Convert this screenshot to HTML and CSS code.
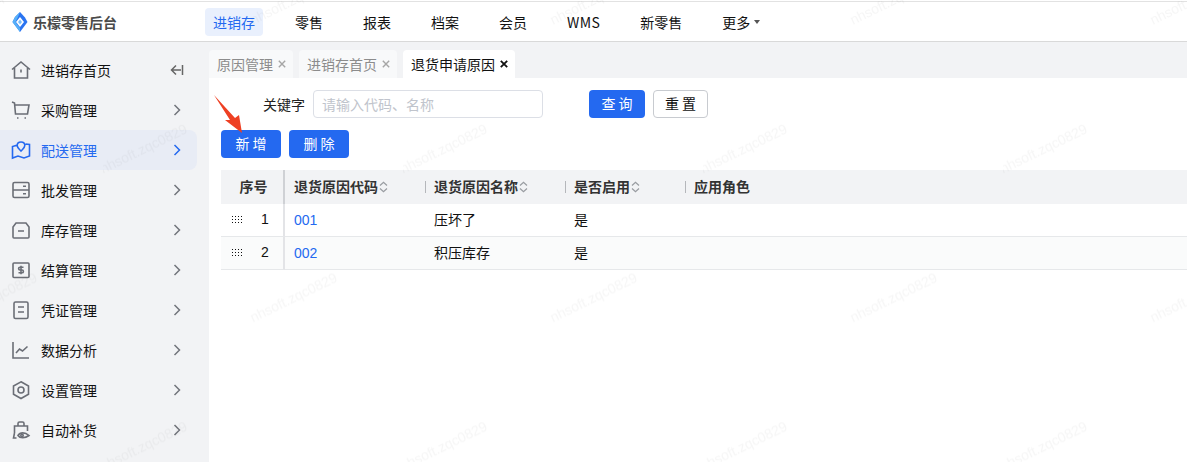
FILE: index.html
```html
<!DOCTYPE html>
<html lang="zh-CN">
<head>
<meta charset="utf-8">
<title>退货申请原因</title>
<link rel="stylesheet" href="styles.css">
</head>
<body>
<header class="topbar">
  <div class="brand">
    <svg class="brand-logo" width="16" height="20" viewBox="0 0 16 20">
      <path d="M8 0 13 5.500 15.500 10 8 20 .5 10 3 5Z" fill="#2a74f1"/>
      <path d="M.5 10 3 5 8 0 6 5 3.500 10 8 16 8 20Z" fill="#56b0f8"/>
      <path d="M8 5 12 10 8 15 4 10Z" fill="#fff"/>
      <path d="M8 7.500 10 10 8 12.500 6 10Z" fill="#7cc0fa"/>
    </svg>
    <span class="brand-name">乐檬零售后台</span>
  </div>
  <nav class="topnav">
    <a class="topnav-item is-active">进销存</a>
    <a class="topnav-item">零售</a>
    <a class="topnav-item">报表</a>
    <a class="topnav-item">档案</a>
    <a class="topnav-item">会员</a>
    <a class="topnav-item topnav-latin">WMS</a>
    <a class="topnav-item">新零售</a>
    <a class="topnav-item">更多<i class="caret"></i></a>
  </nav>
</header>

<div class="layout">
  <aside class="sidebar">
    <a class="side-item">
      <svg class="side-icon" viewBox="0 0 20 20"><path d="M1 9.500 10 2l9 7.500M3.500 8v10h13V8M10 9.500v3"/></svg>
      <span class="side-label">进销存首页</span>
      <svg class="side-collapse" viewBox="0 0 14 12"><path d="M6 1.500 1.500 6 6 10.500M1.500 6H11M12.500 1v10"/></svg>
    </a>
    <a class="side-item">
      <svg class="side-icon" viewBox="0 0 20 20"><path d="M1 2l2.500 1 1 11h12L18 5H4"/><path d="M6 18h1.500M13.500 18H15"/></svg>
      <span class="side-label">采购管理</span>
      <svg class="side-arrow" viewBox="0 0 8 12"><path d="M1.500 1 6.500 6l-5 5"/></svg>
    </a>
    <a class="side-item is-active">
      <svg class="side-icon" viewBox="0 0 20 20"><path d="M6.500 5 1.500 6.500v11.500l5.500-2 6 2 5.500-2V4.500l-4-.5M10 2c-2.200 0-3.800 1.600-3.800 3.600 0 2.400 2.300 3.700 3.800 5.400 1.500-1.700 3.800-3 3.800-5.400C13.800 3.600 12.200 2 10 2Z"/></svg>
      <span class="side-label">配送管理</span>
      <svg class="side-arrow" viewBox="0 0 8 12"><path d="M1.500 1 6.500 6l-5 5"/></svg>
    </a>
    <a class="side-item">
      <svg class="side-icon" viewBox="0 0 20 20"><rect x="2" y="2.500" width="16" height="15" rx="1.500"/><path d="M2 10h16M12 6.300h3M12 13.800h3"/></svg>
      <span class="side-label">批发管理</span>
      <svg class="side-arrow" viewBox="0 0 8 12"><path d="M1.500 1 6.500 6l-5 5"/></svg>
    </a>
    <a class="side-item">
      <svg class="side-icon" viewBox="0 0 20 20"><path d="M5 3h10l3 4v10a1 1 0 0 1-1 1H3a1 1 0 0 1-1-1V7ZM7 11h6"/></svg>
      <span class="side-label">库存管理</span>
      <svg class="side-arrow" viewBox="0 0 8 12"><path d="M1.500 1 6.500 6l-5 5"/></svg>
    </a>
    <a class="side-item">
      <svg class="side-icon" viewBox="0 0 20 20"><rect x="2" y="3" width="16" height="14.500" rx="1"/><path d="M12.500 7.200H9a1.400 1.400 0 0 0 0 2.800h2a1.400 1.400 0 0 1 0 2.800H7.500M10 5.800v8.400"/></svg>
      <span class="side-label">结算管理</span>
      <svg class="side-arrow" viewBox="0 0 8 12"><path d="M1.500 1 6.500 6l-5 5"/></svg>
    </a>
    <a class="side-item">
      <svg class="side-icon" viewBox="0 0 20 20"><rect x="3" y="2" width="14" height="16.500" rx="1.500"/><path d="M7 7h6M7 12h6"/></svg>
      <span class="side-label">凭证管理</span>
      <svg class="side-arrow" viewBox="0 0 8 12"><path d="M1.500 1 6.500 6l-5 5"/></svg>
    </a>
    <a class="side-item">
      <svg class="side-icon" viewBox="0 0 20 20"><path d="M2 2v16h16M5 13l3.500-4 3 2 5-4.500"/></svg>
      <span class="side-label">数据分析</span>
      <svg class="side-arrow" viewBox="0 0 8 12"><path d="M1.500 1 6.500 6l-5 5"/></svg>
    </a>
    <a class="side-item">
      <svg class="side-icon" viewBox="0 0 20 20"><path d="M10 1.800 17.500 6v8.200L10 18.500 2.500 14.200V6Z"/><circle cx="10" cy="10" r="3"/></svg>
      <span class="side-label">设置管理</span>
      <svg class="side-arrow" viewBox="0 0 8 12"><path d="M1.500 1 6.500 6l-5 5"/></svg>
    </a>
    <a class="side-item">
      <svg class="side-icon" viewBox="0 0 20 20"><path d="M7 6V3.500A1.500 1.500 0 0 1 8.500 2h3A1.500 1.500 0 0 1 13 3.500V6M3.500 13V6h13v5M3.500 13l-1 5h3M7 15.500c2-3.500 7-3.500 11 0-4 3-9 3-11 0Z"/><circle cx="11" cy="15.500" r="1.200"/></svg>
      <span class="side-label">自动补货</span>
      <svg class="side-arrow" viewBox="0 0 8 12"><path d="M1.500 1 6.500 6l-5 5"/></svg>
    </a>
  </aside>

  <main class="workspace">
    <div class="tabs">
      <div class="tab">原因管理<svg class="tab-close" viewBox="0 0 8 8"><path d="M.8.800l6.400 6.400M7.200.800.800 7.200"/></svg></div>
      <div class="tab">进销存首页<svg class="tab-close" viewBox="0 0 8 8"><path d="M.8.800l6.400 6.400M7.200.800.800 7.200"/></svg></div>
      <div class="tab is-active">退货申请原因<svg class="tab-close" viewBox="0 0 8 8"><path d="M.8.800l6.400 6.400M7.200.800.800 7.200"/></svg></div>
    </div>
    <section class="panel">
      <div class="search-row">
        <label class="search-label">关键字</label>
        <div class="search-input">请输入代码、名称</div>
        <button class="btn btn-primary btn-query">查 询</button>
        <button class="btn btn-plain">重 置</button>
      </div>
      <div class="action-row">
        <button class="btn btn-primary btn-wide">新 增</button>
        <button class="btn btn-primary btn-wide">删 除</button>
      </div>
      <table class="grid">
        <colgroup>
          <col class="col-no"><col class="col-code"><col class="col-name"><col class="col-flag"><col>
        </colgroup>
        <thead>
          <tr>
            <th class="cell-no">序号</th>
            <th>退货原因代码<svg class="sort" viewBox="0 0 9 12"><path d="M1 4.500 4.500 1.200 8 4.500M1 7.500l3.500 3.300L8 7.500"/></svg></th>
            <th class="has-sep">退货原因名称<svg class="sort" viewBox="0 0 9 12"><path d="M1 4.500 4.500 1.200 8 4.500M1 7.500l3.500 3.300L8 7.500"/></svg></th>
            <th class="has-sep">是否启用<svg class="sort" viewBox="0 0 9 12"><path d="M1 4.500 4.500 1.200 8 4.500M1 7.500l3.500 3.300L8 7.500"/></svg></th>
            <th class="has-sep">应用角色</th>
          </tr>
        </thead>
        <tbody>
          <tr>
            <td class="cell-no"><span class="row-no"><i class="drag"></i><span class="num">1</span></span></td>
            <td><a class="link">001</a></td><td>压坏了</td><td>是</td><td></td>
          </tr>
          <tr class="is-alt">
            <td class="cell-no"><span class="row-no"><i class="drag"></i><span class="num">2</span></span></td>
            <td><a class="link">002</a></td><td>积压库存</td><td>是</td><td></td>
          </tr>
        </tbody>
      </table>
    </section>
  </main>
</div>

<svg class="pointer-arrow" width="30" height="40" viewBox="0 0 30 40">
  <path d="M0 0 21 23 25 20 28 38 11 25 16 25Z" fill="#ee4023"/>
</svg>

<svg class="watermark" width="1187" height="462">
  <defs>
    <pattern id="wm" width="300" height="297.500" patternUnits="userSpaceOnUse" x="103" y="25">
      <text class="wm-text" transform="translate(150 0) rotate(-26)">nhsoft.zqc0829</text>
      <text class="wm-text" transform="translate(150 297.500) rotate(-26)">nhsoft.zqc0829</text>
      <text class="wm-text" transform="translate(0 148.750) rotate(-26)">nhsoft.zqc0829</text>
    </pattern>
  </defs>
  <rect width="1187" height="462" fill="url(#wm)"/>
</svg>
</body>
</html>
```

FILE: styles.css
```css
* { box-sizing: border-box; }
html, body { margin: 0; height: 100%; }
body {
  position: relative;
  width: 1187px;
  height: 462px;
  overflow: hidden;
  background: #fff;
  color: #1a1a1a;
  font-family: "Noto Sans CJK SC", "Liberation Sans", sans-serif;
  font-size: 14px;
}
a { color: inherit; text-decoration: none; }

.topbar {
  display: flex;
  align-items: center;
  height: 41px;
  margin-top: 1px;
  background: #fff;
  border-top: 1px solid #e2e2e2;
  border-bottom: 1px solid #d9d9d9;
}
.brand { display: flex; align-items: center; width: 205px; padding-left: 12px; gap: 5px; }
.brand-logo { display: block; }
.brand-name { font-size: 14px; font-weight: 700; color: #4a4a4a; line-height: 20px; }

.topnav { display: flex; gap: 24px; }
.topnav-item {
  display: flex;
  align-items: center;
  height: 28px;
  padding: 0 8px;
  border-radius: 4px;
  color: #111;
  line-height: 28px;
}
.topnav-item.is-active { background: #e9f0fd; color: #2469f0; }
.topnav-latin { letter-spacing: .4px; }
.caret {
  width: 0;
  height: 0;
  margin: 0 -4px 0 4px;
  border: 3.500px solid transparent;
  border-top: 4px solid #555;
  border-bottom: 0;
}

.layout { display: flex; height: 420px; }

.sidebar { width: 209px; flex: none; padding-top: 8px; background: #f2f3f5; }
.side-item {
  display: flex;
  align-items: center;
  width: 197px;
  height: 40px;
  padding-left: 11px;
  border-radius: 0 8px 8px 0;
  color: #111;
}
.side-item.is-active { background: #e8ecf5; color: #2469f0; }
.side-icon {
  width: 20px;
  height: 20px;
  flex: none;
  fill: none;
  stroke: #6b6e76;
  stroke-width: 1.600;
}
.side-item.is-active .side-icon { stroke: #2469f0; }
.side-label { margin-left: 10px; flex: 1; line-height: 20px; }
.side-arrow {
  width: 8px;
  height: 12px;
  margin-right: 16px;
  fill: none;
  stroke: #72757c;
  stroke-width: 1.500;
}
.side-item.is-active .side-arrow { stroke: #2469f0; }
.side-collapse {
  width: 14px;
  height: 12px;
  margin-right: 13px;
  fill: none;
  stroke: #666;
  stroke-width: 1.500;
}

.workspace { flex: 1; min-width: 0; display: flex; flex-direction: column; background: #f2f3f5; }
.tabs { display: flex; gap: 6px; height: 36px; padding-top: 8px; }
.tab {
  display: flex;
  align-items: center;
  height: 28px;
  padding: 0 7px 0 8px;
  border-radius: 4px 4px 0 0;
  background: #f8f9fa;
  color: #8c8c8c;
}
.tab.is-active { background: #fff; color: #111; }
.tab-close {
  width: 8px;
  height: 8px;
  margin-left: 5px;
  fill: none;
  stroke: #a6a6a6;
  stroke-width: 1.400;
}
.tab.is-active .tab-close { stroke: #111; stroke-width: 1.800; }

.panel { flex: 1; background: #fff; padding: 12px 0 0 12px; }
.search-row { display: flex; align-items: center; height: 28px; padding-left: 42px; }
.search-label { width: 42px; color: #222; }
.search-input {
  width: 230px;
  height: 28px;
  margin-left: 8px;
  padding-left: 8px;
  border: 1px solid #dcdfe6;
  border-radius: 4px;
  color: #c0c4cc;
  line-height: 26px;
}
.btn {
  height: 28px;
  padding: 0 0 2px;
  border: 1px solid transparent;
  border-radius: 4px;
  font: inherit;
  line-height: 24px;
}
.btn-primary { background: #2469f0; color: #fff; }
.btn-plain { width: 55px; margin-left: 8px; background: #fff; border-color: #c8cbd0; color: #111; }
.btn-query { width: 56px; margin-left: 46px; }
.btn-wide { width: 60px; }
.action-row { display: flex; gap: 8px; margin-top: 12px; }

.grid {
  width: 966px;
  margin-top: 12px;
  border-collapse: separate;
  border-spacing: 0;
  table-layout: fixed;
}
.col-no { width: 64px; }
.col-code, .col-name { width: 140px; }
.col-flag { width: 120px; }
.grid th {
  position: relative;
  height: 34px;
  padding: 0 0 2px 9px;
  background: #f2f3f5;
  color: #333;
  font-weight: 700;
  text-align: left;
  white-space: nowrap;
}
.grid th.has-sep::before {
  content: "";
  position: absolute;
  left: 0;
  top: 11px;
  height: 12px;
  border-left: 1px solid #b5b7bb;
}
.grid th.cell-no { padding: 0 0 2px 3px; text-align: center; }
.grid td {
  height: 33px;
  padding: 0 0 2px 9px;
  border-bottom: 1px solid #e6e8ea;
  color: #111;
}
.grid .cell-no { border-right: 2px solid #e3e4e7; }
.grid th.cell-no { border-right-color: #cfd1d5; }
.grid td.cell-no { padding: 0 0 2px; }
.is-alt td { background: #fafbfb; }
.sort {
  width: 9px;
  height: 12px;
  margin-left: 1px;
  vertical-align: -1px;
  fill: none;
  stroke: #999ca1;
  stroke-width: 1.200;
}
.row-no { display: flex; align-items: center; padding-left: 11px; }
.drag {
  width: 10px;
  height: 7px;
  background-image: radial-gradient(circle at .5px .5px, #111 .8px, transparent .9px);
  background-size: 3px 3px;
}
.num { width: 22px; margin-left: 12px; text-align: center; font-family: "Liberation Sans", sans-serif; font-size: 14px; }
.link { color: #2469f0; font-family: "Liberation Sans", sans-serif; }

.pointer-arrow { position: absolute; left: 214px; top: 95px; }
.watermark { position: absolute; left: 0; top: 0; pointer-events: none; }
.wm-text { font-family: "Liberation Sans", sans-serif; font-size: 14px; fill: rgba(0, 0, 0, 0.035); }
```
